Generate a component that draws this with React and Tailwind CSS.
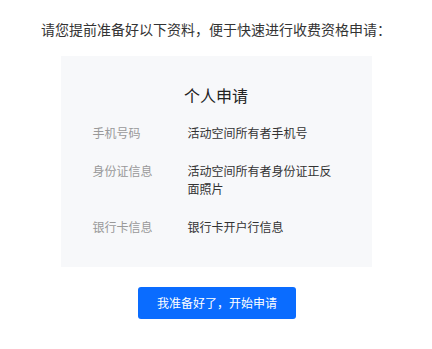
const ITEMS = [
  { label: '手机号码', value: '活动空间所有者手机号' },
  { label: '身份证信息', value: '活动空间所有者身份证正反面照片' },
  { label: '银行卡信息', value: '银行卡开户行信息' },
]

export default function App() {
  return (
    <div
      className="w-[432px] h-[349px] bg-white flex flex-col items-center"
      style={{ fontFamily: '"Noto Sans CJK SC", "Noto Sans", sans-serif' }}
    >
      <p className="mt-[19px] text-[14px] leading-[20px] text-[#333]">
        请您提前准备好以下资料，便于快速进行收费资格申请：
      </p>

      {/* Panel */}
      <div className="mt-[17px] w-[311px] bg-[#f7f8fa] pt-[27px] pb-[31px] pl-[32px]">
        <h2 className="text-center -ml-[32px] text-[16px] leading-[24px] text-[#222]">个人申请</h2>
        <div className="mt-[17px] flex flex-col gap-[20px]">
          {ITEMS.map(item => (
            <div key={item.label} className="flex text-[12px] leading-[18px]">
              <span className="w-[95px] shrink-0 text-[#999]">{item.label}</span>
              <span className="w-[150px] text-[#333]">{item.value}</span>
            </div>
          ))}
        </div>
      </div>

      <button className="mt-[20px] ml-[2px] w-[158px] h-[32px] rounded-[3px] bg-[#0a6cff] text-white text-[12px]">
        我准备好了，开始申请
      </button>
    </div>
  )
}
